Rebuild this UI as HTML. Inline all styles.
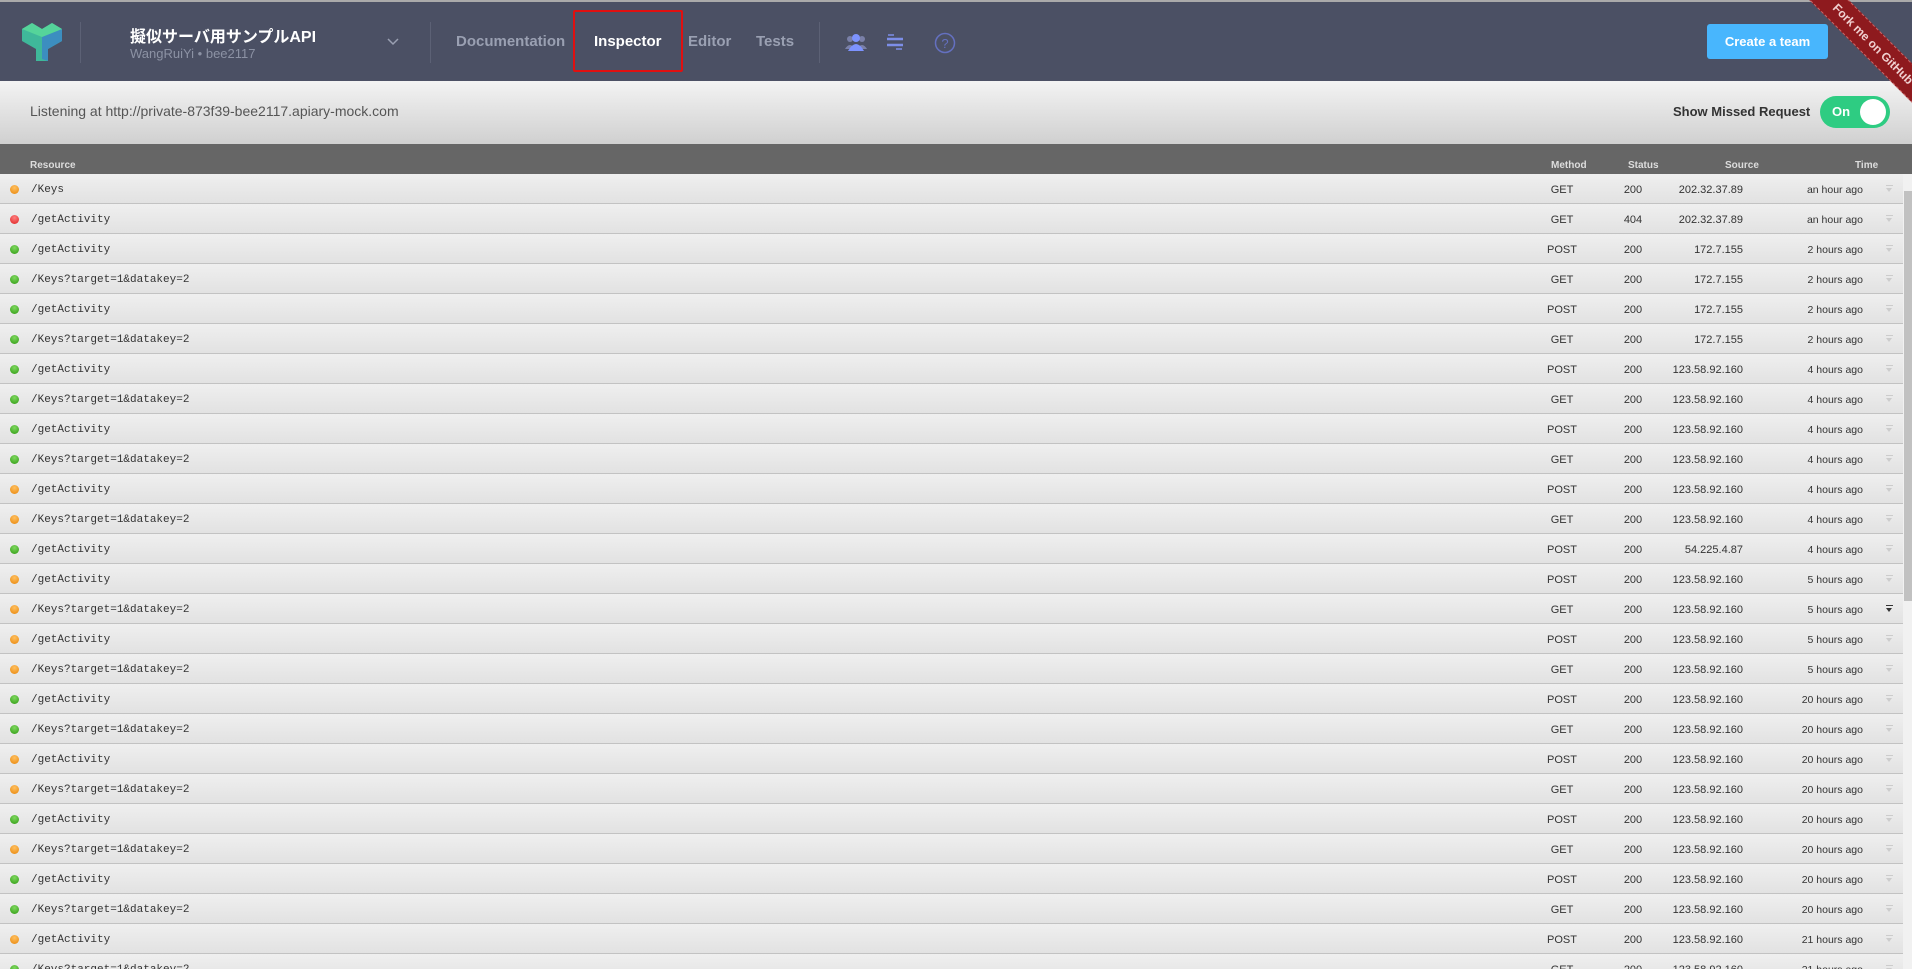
<!DOCTYPE html>
<html><head><meta charset="utf-8"><style>
*{margin:0;padding:0;box-sizing:border-box}
html,body{width:1912px;height:969px;overflow:hidden}
body{background:#e8e8e8;font-family:"Liberation Sans","Noto Sans CJK JP",sans-serif;position:relative}
.hdr{position:absolute;left:0;top:0;width:1912px;height:81px;background:#4b5064;border-top:2px solid #aaa}
.abs{position:absolute}
.div{position:absolute;top:20px;width:1px;height:41px;background:#5c6175}
.nav{position:absolute;top:31px;font-size:15px;font-weight:bold;color:#9aa0b2}
.bar{position:absolute;left:0;top:81px;width:1912px;height:63px;background:linear-gradient(#f3f3f3,#d0d0d0)}
.th{position:absolute;left:0;top:144px;width:1912px;height:30px;background:#666;color:#ddd;font-size:10px;font-weight:bold}
.th span{position:absolute;top:16px}
.rows{position:absolute;left:0;top:174px;width:1903px;height:795px;overflow:hidden}
.r{position:relative;height:30px;background:linear-gradient(#efefef,#e2e2e2);border-bottom:1px solid #c2c2c2;font-size:11px;color:#333}
.r i{position:absolute;left:10px;top:11px;width:9px;height:9px;border-radius:50%}
.o{background:radial-gradient(circle at 50% 30%,#ffc060,#e8860a)}
.g{background:radial-gradient(circle at 50% 30%,#7fd860,#2e9a10)}
.d{background:radial-gradient(circle at 50% 30%,#ff8080,#dd2020)}
.r b{position:absolute;left:31px;top:10px;font:11px "Liberation Mono",monospace;color:#333;font-weight:normal}
.r em{position:absolute;left:1532px;width:60px;text-align:center;top:10px;font-style:normal}
.r s{position:absolute;left:1603px;width:60px;text-align:center;top:10px;text-decoration:none}
.r u{position:absolute;right:160px;top:10px;text-decoration:none}
.r q{position:absolute;right:40px;top:10px;font-size:10.5px}
.r q:before,.r q:after{content:""}
.r a{position:absolute;left:1886px;top:11px;width:7px;height:8px;border-top:1px solid #ccc}
.r a:after{content:"";position:absolute;left:0;top:2px;border-left:3.5px solid transparent;border-right:3.5px solid transparent;border-top:4px solid #ccc}
.r a.k{border-top-color:#333}.r a.k:after{border-top-color:#333}
</style></head><body>
<div class="hdr">
<svg class="abs" style="left:22px;top:21px" width="40" height="38" viewBox="0 0 40 38"><polygon points="0,6 10,0 20,6 30,0 40,6 40,18 26,26 26,38 14,38 14,26 0,18" fill="#3fb89a"/><polygon points="20,14 40,6 40,18 26,26 26,38 20,36" fill="#3c8ec0"/><polygon points="0,6 10,0 20,6 30,0 40,6 20,14" fill="#55d49a"/></svg>
<div class="div" style="left:80px"></div>
<div class="abs" style="left:130px;top:21px;font-size:16px;font-weight:bold;color:#fff">擬似サーバ用サンプルAPI</div>
<div class="abs" style="left:130px;top:44px;font-size:13px;color:#8c92a4">WangRuiYi • bee2117</div>
<svg class="abs" style="left:387px;top:36px" width="12" height="8"><path d="M1 1 L6 6 L11 1" stroke="#9aa0b2" stroke-width="1.5" fill="none"/></svg>
<div class="div" style="left:430px"></div>
<div class="nav" style="left:456px">Documentation</div>
<div class="nav" style="left:594px;color:#fff">Inspector</div>
<div class="abs" style="left:573px;top:8px;width:110px;height:62px;border:2px solid #e01010;border-radius:2px"></div>
<div class="nav" style="left:688px">Editor</div>
<div class="nav" style="left:756px">Tests</div>
<div class="div" style="left:819px"></div>
<svg class="abs" style="left:845px;top:31px" width="22" height="18" viewBox="0 0 22 18"><circle cx="5" cy="6" r="3" fill="#7a80a8"/><circle cx="17" cy="6" r="3" fill="#7a80a8"/><path d="M0 16 Q5 8 10 16Z M12 16 Q17 8 22 16Z" fill="#7a80a8"/><circle cx="11" cy="5" r="4" fill="#7d93ff"/><path d="M3 18 Q11 4 19 18Z" fill="#7d93ff"/></svg>
<svg class="abs" style="left:886px;top:31px" width="18" height="18" viewBox="0 0 18 18"><path d="M1 6 H17 M1 12 H17" stroke="#7d8ee8" stroke-width="2.5"/><path d="M2 2 H8 M10 16 H16" stroke="#7d8ee8" stroke-width="1.5"/></svg>
<svg class="abs" style="left:934px;top:30px" width="22" height="22"><circle cx="11" cy="11" r="9.5" stroke="#6470c0" stroke-width="1.5" fill="none"/><text x="11" y="16" text-anchor="middle" font-size="13" fill="#6470c0" font-family="Liberation Sans">?</text></svg>
<div class="abs" style="left:1707px;top:22px;width:121px;height:35px;background:#48b6fd;border-radius:3px;color:#fff;font-weight:bold;font-size:13px;text-align:center;line-height:35px">Create a team</div>
</div>
<div class="abs" style="left:1790px;top:0;width:122px;height:122px;overflow:hidden;z-index:5">
<div style="position:absolute;left:-2px;top:30px;width:170px;height:28px;background:#8e1a1e;transform:rotate(45deg);color:#f0d0d0;font-size:12px;font-weight:bold;text-align:center;line-height:26px;border-top:1px dashed #c66;border-bottom:1px dashed #c66">Fork me on GitHub</div>
</div>
<div class="bar">
<div class="abs" style="left:30px;top:22px;font-size:14px;color:#555">Listening at http://private-873f39-bee2117.apiary-mock.com</div>
<div class="abs" style="left:1673px;top:23px;font-size:13px;font-weight:bold;color:#333">Show Missed Request</div>
<div class="abs" style="left:1820px;top:15px;width:70px;height:32px;border-radius:16px;background:#2ecc82"><span style="position:absolute;left:12px;top:8px;color:#fff;font-weight:bold;font-size:13px">On</span><span style="position:absolute;left:40px;top:3px;width:26px;height:26px;border-radius:50%;background:#fff"></span></div>
</div>
<div class="th"><span style="left:30px">Resource</span><span style="left:1551px">Method</span><span style="left:1628px">Status</span><span style="left:1725px">Source</span><span style="left:1855px">Time</span></div>
<div class="rows">
<div class="r"><i class="o"></i><b>/Keys</b><em>GET</em><s>200</s><u>202.32.37.89</u><q>an hour ago</q><a></a></div>
<div class="r"><i class="d"></i><b>/getActivity</b><em>GET</em><s>404</s><u>202.32.37.89</u><q>an hour ago</q><a></a></div>
<div class="r"><i class="g"></i><b>/getActivity</b><em>POST</em><s>200</s><u>172.7.155</u><q>2 hours ago</q><a></a></div>
<div class="r"><i class="g"></i><b>/Keys?target=1&amp;datakey=2</b><em>GET</em><s>200</s><u>172.7.155</u><q>2 hours ago</q><a></a></div>
<div class="r"><i class="g"></i><b>/getActivity</b><em>POST</em><s>200</s><u>172.7.155</u><q>2 hours ago</q><a></a></div>
<div class="r"><i class="g"></i><b>/Keys?target=1&amp;datakey=2</b><em>GET</em><s>200</s><u>172.7.155</u><q>2 hours ago</q><a></a></div>
<div class="r"><i class="g"></i><b>/getActivity</b><em>POST</em><s>200</s><u>123.58.92.160</u><q>4 hours ago</q><a></a></div>
<div class="r"><i class="g"></i><b>/Keys?target=1&amp;datakey=2</b><em>GET</em><s>200</s><u>123.58.92.160</u><q>4 hours ago</q><a></a></div>
<div class="r"><i class="g"></i><b>/getActivity</b><em>POST</em><s>200</s><u>123.58.92.160</u><q>4 hours ago</q><a></a></div>
<div class="r"><i class="g"></i><b>/Keys?target=1&amp;datakey=2</b><em>GET</em><s>200</s><u>123.58.92.160</u><q>4 hours ago</q><a></a></div>
<div class="r"><i class="o"></i><b>/getActivity</b><em>POST</em><s>200</s><u>123.58.92.160</u><q>4 hours ago</q><a></a></div>
<div class="r"><i class="o"></i><b>/Keys?target=1&amp;datakey=2</b><em>GET</em><s>200</s><u>123.58.92.160</u><q>4 hours ago</q><a></a></div>
<div class="r"><i class="g"></i><b>/getActivity</b><em>POST</em><s>200</s><u>54.225.4.87</u><q>4 hours ago</q><a></a></div>
<div class="r"><i class="o"></i><b>/getActivity</b><em>POST</em><s>200</s><u>123.58.92.160</u><q>5 hours ago</q><a></a></div>
<div class="r"><i class="o"></i><b>/Keys?target=1&amp;datakey=2</b><em>GET</em><s>200</s><u>123.58.92.160</u><q>5 hours ago</q><a class="k"></a></div>
<div class="r"><i class="o"></i><b>/getActivity</b><em>POST</em><s>200</s><u>123.58.92.160</u><q>5 hours ago</q><a></a></div>
<div class="r"><i class="o"></i><b>/Keys?target=1&amp;datakey=2</b><em>GET</em><s>200</s><u>123.58.92.160</u><q>5 hours ago</q><a></a></div>
<div class="r"><i class="g"></i><b>/getActivity</b><em>POST</em><s>200</s><u>123.58.92.160</u><q>20 hours ago</q><a></a></div>
<div class="r"><i class="g"></i><b>/Keys?target=1&amp;datakey=2</b><em>GET</em><s>200</s><u>123.58.92.160</u><q>20 hours ago</q><a></a></div>
<div class="r"><i class="o"></i><b>/getActivity</b><em>POST</em><s>200</s><u>123.58.92.160</u><q>20 hours ago</q><a></a></div>
<div class="r"><i class="o"></i><b>/Keys?target=1&amp;datakey=2</b><em>GET</em><s>200</s><u>123.58.92.160</u><q>20 hours ago</q><a></a></div>
<div class="r"><i class="g"></i><b>/getActivity</b><em>POST</em><s>200</s><u>123.58.92.160</u><q>20 hours ago</q><a></a></div>
<div class="r"><i class="o"></i><b>/Keys?target=1&amp;datakey=2</b><em>GET</em><s>200</s><u>123.58.92.160</u><q>20 hours ago</q><a></a></div>
<div class="r"><i class="g"></i><b>/getActivity</b><em>POST</em><s>200</s><u>123.58.92.160</u><q>20 hours ago</q><a></a></div>
<div class="r"><i class="g"></i><b>/Keys?target=1&amp;datakey=2</b><em>GET</em><s>200</s><u>123.58.92.160</u><q>20 hours ago</q><a></a></div>
<div class="r"><i class="o"></i><b>/getActivity</b><em>POST</em><s>200</s><u>123.58.92.160</u><q>21 hours ago</q><a></a></div>
<div class="r"><i class="g"></i><b>/Keys?target=1&amp;datakey=2</b><em>GET</em><s>200</s><u>123.58.92.160</u><q>21 hours ago</q><a></a></div>
</div>
<div class="abs" style="left:1903px;top:174px;width:9px;height:795px;background:#f1f1f1"></div>
<div class="abs" style="left:1904px;top:191px;width:8px;height:410px;background:#c1c1c1"></div>
</body></html>
